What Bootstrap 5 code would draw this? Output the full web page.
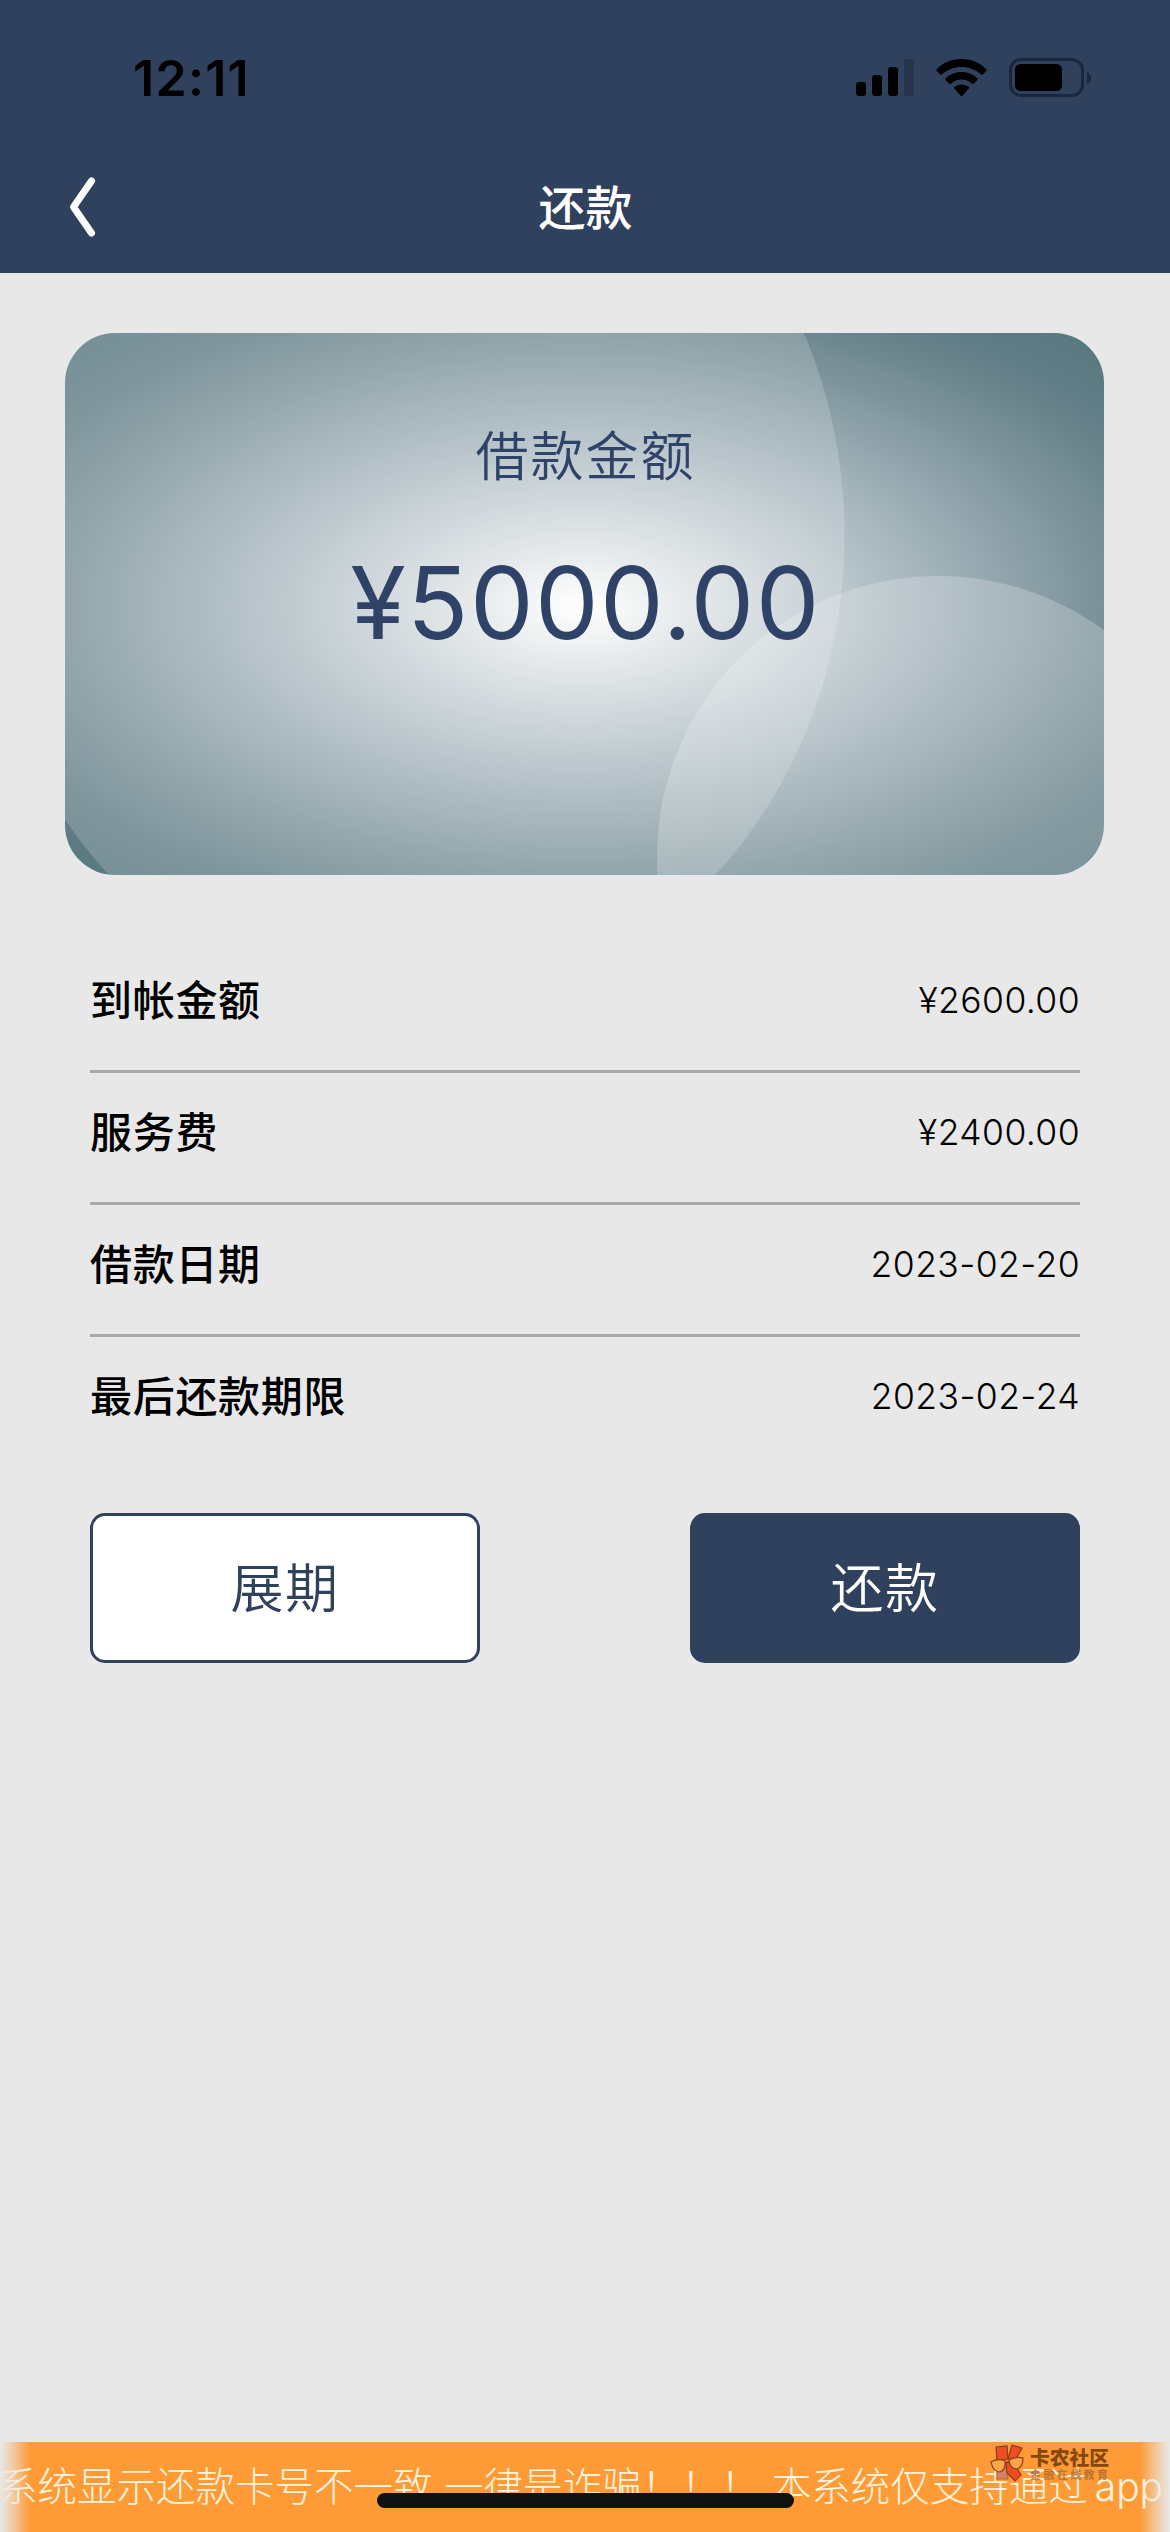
<!DOCTYPE html>
<html lang="zh-CN">
<head>
<meta charset="utf-8">
<meta name="viewport" content="width=device-width, initial-scale=1">
<title>还款</title>
<link rel="stylesheet" href="https://cdn.jsdelivr.net/npm/bootstrap@5.3.0/dist/css/bootstrap.min.css">
<style>
  :root { --navy: #2f415d; --page: #e8e8e8; }
  body { font-family: Inter, "Noto Sans CJK SC", sans-serif; background: var(--page); color: #000; }
  .screen { height: 2532px; }
  .topbar { background: var(--navy); height: 273px; }
  .statusbar { height: 140px; padding: 58px 78px 0 133px; }
  .clock { font-size: 50px; font-weight: 600; line-height: 40px; letter-spacing: 1.3px; }
  .titlebar { height: 133px; padding: 2px 67px 0 68px; }
  .titlebar h1 { font-size: 47px; font-weight: 500; line-height: 60px; }
  .side { width: 60px; }
  .loan { margin: 60px 66px 0 65px; height: 542px; border-radius: 50px; overflow: hidden; color: #2f4369;
    background:
      radial-gradient(circle at 873px 524px, rgba(255,255,255,.22) 280.5px, transparent 281.5px),
      radial-gradient(433px 477px at 347px 202px, rgba(255,255,255,.175) 99.8%, transparent 100%),
      radial-gradient(680px 350px at 516px 274px, #fff 0, #dde2e4 18%, #b0bec5 44%, #7f959d 74%, #627e86 93%, #54757d 112%);
    padding: 87px 0 0 2px; }
  .loan-label { font-size: 53px; line-height: 74px; letter-spacing: 2px; font-weight: 350; }
  .loan-sum { font-size: 101px; line-height: 110px; margin-top: 53px; font-weight: 400; letter-spacing: 1.4px; }
  .details { padding: 0 90px; margin-top: 66px; }
  .detail { height: 132px; border-bottom: 3px solid #a9a9a9; padding-bottom: 10px; }
  .detail:last-child { border-bottom: 0; padding-bottom: 13px; }
  .detail dt { font-size: 42px; line-height: 60px; font-weight: 500; letter-spacing: .7px; }
  .detail dd { font-size: 35.5px; line-height: 60px; font-weight: 300; letter-spacing: .4px; margin: 0; }
  .actions { padding: 0 90px; margin-top: 44px; }
  .actions .btn { width: 390px; height: 150px; border: 3px solid var(--navy); border-radius: 15px; font-size: 53px; letter-spacing: 1.5px; font-weight: 350; }
  .actions .btn span { display: block; padding-top: 4px; }
  .btn-extend { background: #fff; color: var(--navy); }
  .btn-repay { background: var(--navy); color: #fff; }
  .notice { height: 90px; background: #ff9b36; color: #fff3df; font-size: 39.5px; line-height: 90px; font-weight: 300; }
  .notice-text { margin-left: -2px; white-space: pre; word-spacing: .5px; }
  .notice-latin { margin-left: 7px; font-size: 39px; }
  .notice::after { content: ""; position: absolute; inset: 0;
    background: linear-gradient(90deg, var(--page) 0, rgba(232,232,232,.75) 9px, rgba(232,232,232,0) 30px, rgba(232,232,232,0) calc(100% - 30px), rgba(232,232,232,.75) calc(100% - 9px), var(--page) 100%); }
  .home-indicator { position: absolute; z-index: 2; left: 377px; top: 51px; width: 417px; height: 15px; border-radius: 8px; background: #111; }
  .stamp { position: absolute; z-index: 3; left: 990px; top: 2px; }
  .stamp-name { font-size: 19.8px; line-height: 20px; font-weight: 900; color: #84480f; }
  .stamp-sub { font-size: 11px; line-height: 13px; font-weight: 700; color: #a2652f; opacity: .75; letter-spacing: 2.4px; margin-top: 1px; }
</style>
</head>
<body>
<div class="screen d-flex flex-column overflow-hidden">
  <header class="topbar">
    <div class="statusbar d-flex justify-content-between align-items-start">
      <div class="clock">12:11</div>
      <svg width="236" height="40" viewBox="0 0 236 40">
        <rect x="0" y="24" width="10" height="14" rx="3"/>
        <rect x="16" y="17" width="10" height="21" rx="3"/>
        <rect x="32" y="9" width="10" height="29" rx="3"/>
        <rect x="48" y="1" width="10" height="37" rx="3" fill="#26344d"/>
        <g transform="translate(80.500 1)">
          <path d="M25 0C35 0 44 4 50 10.500Q50.500 11.200 49.800 12L46.200 15.600Q45.500 16.100 44.800 15.500C39 10.500 32.500 8 25 8S11 10.500 5.200 15.500Q4.500 16.100 3.800 15.600L.2 12Q-.5 11.200 0 10.500C6 4 15 0 25 0Z"/>
          <path d="M25 13C31.500 13 37 15.500 41 19.500Q41.600 20.300 41 21L37.200 24.700Q36.500 25.300 35.700 24.700C32.500 22 29 20.500 25 20.500S17.500 22 14.300 24.700Q13.500 25.300 12.800 24.700L9 21Q8.400 20.300 9 19.500C13 15.500 18.500 13 25 13Z"/>
          <path d="M25 25.500C28 25.500 30.500 26.500 32.300 28Q33 28.800 32.300 29.600L25.800 36.700Q25 37.500 24.200 36.700L17.700 29.600Q17 28.800 17.700 28C19.500 26.500 22 25.500 25 25.500Z"/>
        </g>
        <rect x="154.500" y="1.500" width="72" height="36" rx="10.500" fill="none" stroke="#1b273d" stroke-width="3"/>
        <rect x="159" y="6" width="47" height="27" rx="5.500"/>
        <path d="M231 14q4 2 4 6t-4 6z" fill="#1b273d"/>
      </svg>
    </div>
    <nav class="titlebar d-flex align-items-center justify-content-between">
      <a class="side" href="#" aria-label="返回"><svg class="d-block" width="32" height="66" viewBox="0 0 32 66"><path d="M23.500 6 L5.500 32 L23.500 58" fill="none" stroke="#fff" stroke-width="7" stroke-linecap="round" stroke-linejoin="round"/></svg></a>
      <h1 class="m-0 text-white">还款</h1>
      <span class="side"></span>
    </nav>
  </header>

  <main class="flex-grow-1">
    <section class="loan text-center">
      <div class="loan-label">借款金额</div>
      <div class="loan-sum">¥5000.00</div>
    </section>
    <dl class="details mb-0">
      <div class="detail d-flex justify-content-between align-items-center"><dt>到帐金额</dt><dd>¥2600.00</dd></div>
      <div class="detail d-flex justify-content-between align-items-center"><dt>服务费</dt><dd>¥2400.00</dd></div>
      <div class="detail d-flex justify-content-between align-items-center"><dt>借款日期</dt><dd>2023-02-20</dd></div>
      <div class="detail d-flex justify-content-between align-items-center"><dt>最后还款期限</dt><dd>2023-02-24</dd></div>
    </dl>
    <div class="actions d-flex justify-content-between">
      <button type="button" class="btn btn-extend p-0"><span>展期</span></button>
      <button type="button" class="btn btn-repay p-0"><span>还款</span></button>
    </div>
  </main>

  <footer class="notice position-relative overflow-hidden">
    <div class="notice-text">系统显示还款卡号不一致 一律是诈骗！！！ 本系统仅支持通过<span class="notice-latin">app</span></div>
    <div class="home-indicator"></div>
    <div class="stamp d-flex">
      <svg width="36" height="38" viewBox="0 0 36 38" stroke="#8a3f12" stroke-width="1.200">
        <path d="M6 3 17 2 18 15 7 17Z" fill="#ee4c22"/>
        <path d="M22 1 32 4 26 15 18 15Z" fill="#ee4c22"/>
        <path d="M7 29 16 20 18 35 7 35Z" fill="#d98168" stroke="#b5683c"/>
        <path d="M16 19 23 18 31 31 25 37 17 29Z" fill="#ee4c22"/>
        <path d="M1 18Q8 14 15 17 16 26 10 28 3 28 1 18Z" fill="#ffa64c"/>
        <path d="M19 16Q26 12 33 14 33 23 27 25 20 25 19 16ZM15 19 19 17" fill="#ffa64c"/>
      </svg>
      <div class="ms-1">
        <div class="stamp-name mt-1">卡农社区</div>
        <div class="stamp-sub">金融在线教育</div>
      </div>
    </div>
  </footer>
</div>
<script src="https://cdn.jsdelivr.net/npm/bootstrap@5.3.0/dist/js/bootstrap.bundle.min.js"></script>
</body>
</html>
